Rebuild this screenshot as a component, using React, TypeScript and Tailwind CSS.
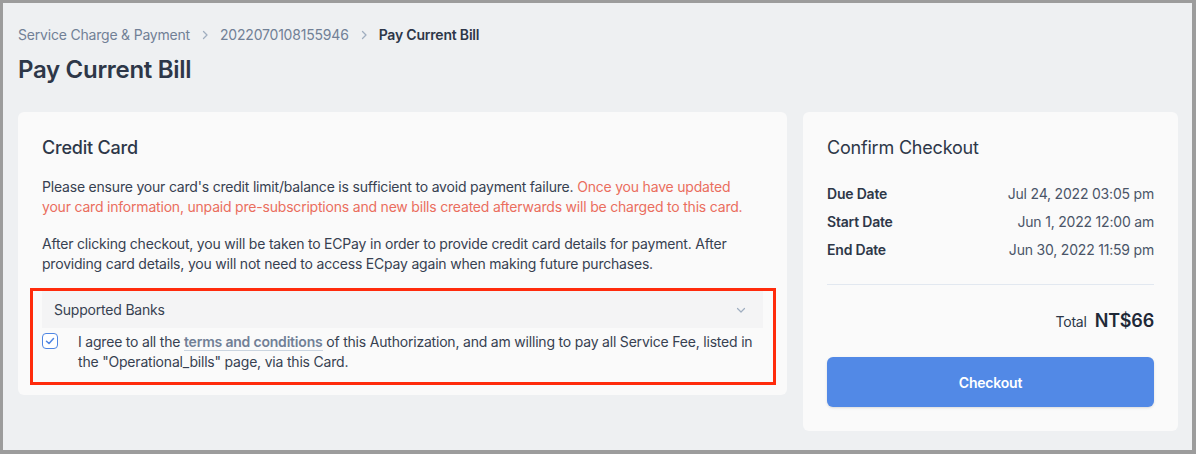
import React from 'react';

const rows = [
  { label: 'Due Date', value: 'Jul 24, 2022 03:05 pm' },
  { label: 'Start Date', value: 'Jun 1, 2022 12:00 am' },
  { label: 'End Date', value: 'Jun 30, 2022 11:59 pm' },
];

const Chevron = () => (
  <svg width="12" height="12" viewBox="0 0 12 12" fill="none" className="text-[#a0aec0]">
    <path d="M4.5 2.5L8 6L4.5 9.5" stroke="currentColor" strokeWidth="1.3" strokeLinecap="round" strokeLinejoin="round" />
  </svg>
);

export default function App() {
  return (
    <div
      className="h-[454px] w-[1196px] overflow-hidden border-t-[3px] border-l-[3px] border-r-4 border-b-4 border-[#9c9c9c] bg-[#eef0f2] text-[#374151] tracking-[-0.2px]"
      style={{ fontFamily: 'Inter, "Noto Sans", sans-serif' }}
    >
      <div className="pl-[15px] pr-[14px]">
        {/* breadcrumb */}
        <div className="flex items-center pt-[22px] text-[14px] leading-[20px]">
          <span className="text-[#718096]">Service Charge &amp; Payment</span>
          <span className="mx-[9px]"><Chevron /></span>
          <span className="text-[#718096]">2022070108155946</span>
          <span className="mx-[9px]"><Chevron /></span>
          <span className="font-semibold text-[#2d3748]">Pay Current Bill</span>
        </div>
        <h1 className="mt-[9px] text-[24px] font-semibold leading-[32px] tracking-[-0.3px] text-[#2d3748]">Pay Current Bill</h1>

        <div className="mt-[26px] flex items-start gap-4">
          {/* left card */}
          <div className="w-[769px] rounded-md bg-[#fafafa] px-6 pt-[24px] pb-[11px]">
            <h2 className="text-[18px] font-medium leading-[24px] text-[#2d3748]">Credit Card</h2>
            <p className="mt-[17px] pr-[10px] text-[14px] leading-[20px]">
              Please ensure your card&apos;s credit limit/balance is sufficient to avoid payment failure.{' '}
              <span className="text-[#ea6e5e]">
                Once you have updated your card information, unpaid pre-subscriptions and new bills created afterwards will be charged to this card.
              </span>
            </p>
            <p className="mt-[17px] text-[14px] leading-[20px]">
              After clicking checkout, you will be taken to ECPay in order to provide credit card details for payment. After providing card details, you will not need to access ECpay again when making future purchases.
            </p>

            <div className="relative mt-[17px]">
              <div className="flex h-[37px] items-center justify-between bg-[#f4f4f5] pl-3 pr-4 text-[14px]">
                <span>Supported Banks</span>
                <svg width="12" height="12" viewBox="0 0 12 12" fill="none" className="text-[#a0aec0]">
                  <path d="M2.5 4.5L6 8L9.5 4.5" stroke="currentColor" strokeWidth="1.2" strokeLinecap="round" strokeLinejoin="round" />
                </svg>
              </div>
              <div className="mt-[4px] flex items-start gap-5 pb-[12px]">
                <span className="mt-[1px] flex h-4 w-4 shrink-0 items-center justify-center rounded-[4px] border border-[#4f86e3] bg-white">
                  <svg width="12" height="12" viewBox="0 0 12 12" fill="none">
                    <path d="M2.5 6.2L5 8.5L9.5 3.5" stroke="#4f86e3" strokeWidth="1.5" strokeLinecap="round" strokeLinejoin="round" />
                  </svg>
                </span>
                <p className="text-[14px] leading-[20px]">
                  I agree to all the{' '}
                  <span className="border-b border-[#cbd5e0] font-semibold text-[#718096]">terms and conditions</span>{' '}
                  of this Authorization, and am willing to pay all Service Fee, listed in the &quot;Operational_bills&quot; page, via this Card.
                </p>
              </div>
              {/* annotation highlight */}
              <div className="pointer-events-none absolute -top-[3px] -left-[12px] -right-[13px] -bottom-[1px] border-[3px] border-[#ff2b0c]" />
            </div>
          </div>

          {/* right card */}
          <div className="w-[375px] rounded-md bg-[#fafafa] px-6 pt-[24px] pb-[24px]">
            <h2 className="text-[18px] font-normal leading-[24px] text-[#2d3748]">Confirm Checkout</h2>
            <div className="mt-[24px] flex flex-col gap-[8px] text-[14px] leading-[20px]">
              {rows.map(r => (
                <div key={r.label} className="flex justify-between">
                  <span className="font-semibold text-[#2d3748]">{r.label}</span>
                  <span className="text-[#4a5568]">{r.value}</span>
                </div>
              ))}
            </div>
            <div className="mt-[24px] border-t border-[#e2e8f0]" />
            <div className="mt-[22px] flex items-baseline justify-end gap-2">
              <span className="text-[14px] text-[#2d3748]">Total</span>
              <span className="text-[18px] font-semibold text-[#1f2937]">NT$66</span>
            </div>
            <button className="mt-[23px] h-[50px] w-full rounded-md bg-[#5289e6] text-[14px] font-semibold text-white shadow-sm">
              Checkout
            </button>
          </div>
        </div>
      </div>
    </div>
  );
}
